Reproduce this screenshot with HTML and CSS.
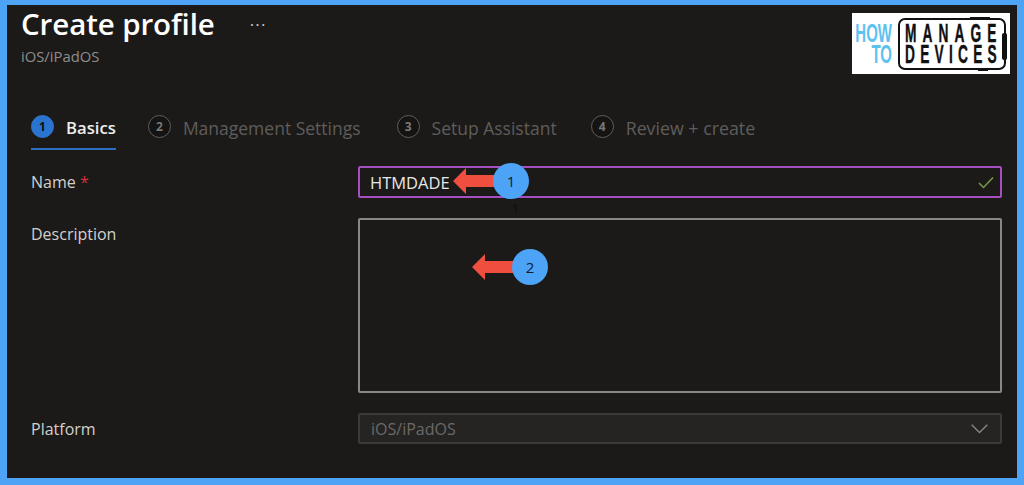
FILE: index.html
```html
<!DOCTYPE html>
<html lang="en">
<head>
<meta charset="utf-8">
<title>Create profile</title>
<link rel="stylesheet" href="styles.css">
</head>
<body>
<div class="frame">
  <header class="head">
    <div class="title-row">
      <h1 class="title">Create profile</h1>
      <span class="more">&middot;&middot;&middot;</span>
    </div>
    <div class="subtitle">iOS/iPadOS</div>
  </header>

  <div class="logo">
    <div class="logo-how"><span>HOW</span><span>TO</span></div>
    <div class="logo-box"><span class="logo-m">MANAGE</span><span class="logo-d">DEVICES</span><i class="logo-notch"></i></div>
  </div>

  <nav class="tabs">
    <div class="tab tab-active"><span class="step step-active">1</span><span class="tab-label">Basics</span></div>
    <div class="tab"><span class="step">2</span><span class="tab-label">Management Settings</span></div>
    <div class="tab tab-setup"><span class="step">3</span><span class="tab-label">Setup Assistant</span></div>
    <div class="tab"><span class="step">4</span><span class="tab-label tab-label-review">Review + create</span></div>
  </nav>

  <form class="form">
    <label class="field-label">Name <span class="req">*</span></label>
    <div class="input input-name">
      <span>HTMDADE</span>
      <svg class="check" width="16" height="13" viewBox="0 0 16 13"><path d="M1 7l4.5 4.5L15 1.5" fill="none" stroke="#7a9a4a" stroke-width="1.5"/></svg>
    </div>
    <label class="field-label">Description</label>
    <div class="input input-desc"></div>
    <label class="field-label">Platform</label>
    <div class="input input-select">
      <span>iOS/iPadOS</span>
      <svg width="17" height="10" viewBox="0 0 17 10"><path d="M.7.7l7.8 7.8L16.3.7" fill="none" stroke="#8a8886" stroke-width="1.3"/></svg>
    </div>
  </form>

  <div class="note note-1">
    <svg class="arrow" width="44" height="26" viewBox="0 0 44 26"><path d="M0 13L13 0v7h31v12H13v7z" fill="#f04e3e"/></svg>
    <span class="badge">1</span>
  </div>
  <span class="stray">1</span>
  <div class="note note-2">
    <svg class="arrow" width="44" height="26" viewBox="0 0 44 26"><path d="M0 13L13 0v7h31v12H13v7z" fill="#f04e3e"/></svg>
    <span class="badge">2</span>
  </div>
</div>
</body>
</html>
```
FILE: styles.css
```css
* { box-sizing: border-box; }
html, body { margin: 0; padding: 0; }
body { width: 1024px; height: 485px; overflow: hidden; font-family: "Open Sans", "Noto Sans", sans-serif; }

.frame {
  position: relative;
  width: 1024px;
  height: 485px;
  background: #1b1a19;
  border: solid #4da3f5;
  border-width: 5px 7px 7px 7px;
  padding: 0 15px 0 24px;
  color: #e6e6e6;
}

.head { margin-left: -10px; height: 92px; }
.title-row { display: flex; align-items: center; height: 38px; }
.title { margin: 0; font-size: 29.5px; font-weight: 600; line-height: 38px; color: #fff; letter-spacing: -0.1px; }
.more { margin-left: 35px; font-size: 17px; letter-spacing: 1.2px; color: #c8c6c4; line-height: 1; }
.subtitle { margin-top: 3px; font-size: 14.8px; line-height: 20px; color: #8f8d8b; }

.tabs { display: flex; gap: 36px; height: 53px; }
.tab { display: flex; align-items: flex-start; gap: 12px; padding-top: 18px; }
.tab-active { border-bottom: 2px solid #2a6fc4; margin-right: -4px; }
.tab-setup { margin-right: -2px; }
.step {
  width: 23px; height: 23px; border-radius: 50%;
  border: 1.5px solid #605e5c;
  color: #7a7876; font-size: 12px; font-weight: 700;
  display: flex; align-items: center; justify-content: center;
  background: #151413;
}
.step-active { background: #2a74d0; border-color: #2a74d0; color: #101010; }
.tab-label { font-size: 17.5px; line-height: 24px; margin-top: 1px; color: #5f5d5b; }
.tab-label-review { font-size: 17.8px; }
.tab-active .tab-label { font-size: 16.7px; color: #eee; font-weight: 600; }

.form {
  display: grid;
  grid-template-columns: 327px 644px;
  grid-template-rows: 32px 175px 31px;
  row-gap: 20px;
  margin-top: 16px;
}
.field-label { font-size: 16px; line-height: 20px; padding-top: 6px; color: #d2d0ce; }
.req { color: #d13438; }

.input { border: 2px solid #8a8886; border-radius: 2px; }
.input-name {
  border-color: #a64fc0;
  display: flex; align-items: center; justify-content: space-between;
  padding: 0 6px 0 10px;
  font-size: 16.5px;
  color: #e8e8e8;
}
.input-select {
  border: 2px solid #3b3a39;
  background: #252423;
  display: flex; align-items: center; justify-content: space-between;
  padding: 0 12px 0 11px;
  font-size: 16px;
  color: #6b6967;
}

.note { position: absolute; display: flex; align-items: center; }
.note-1 { left: 446px; top: 158px; }
.note-2 { left: 465px; top: 244px; }
.arrow { margin-right: -4px; }
.badge {
  position: relative;
  width: 36px; height: 36px; border-radius: 50%;
  background: #4da3f5; color: #102030;
  font-size: 15px; line-height: 36px; text-align: center;
}
.stray { position: absolute; left: 505px; top: 197px; font-size: 12px; line-height: 14px; color: #0c0c0c; }

.logo {
  position: absolute; left: 845px; top: 8px;
  width: 158px; height: 61px;
  background: #fff;
  display: flex; align-items: center; gap: 6px;
  padding: 0 4px 0 3px;
}
.logo-how {
  width: 37px;
  flex: none;
  font-family: "Liberation Sans", sans-serif;
  font-weight: 700; font-size: 25px; line-height: 21px; color: #5ec2f0;
  text-align: right;
}
.logo-how span { display: block; white-space: nowrap; direction: rtl; transform-origin: right center; transform: scaleX(.6); }
.logo-box {
  position: relative;
  flex: none; width: 108px; height: 52px;
  border: 2.5px solid #111; border-radius: 7px;
  padding-left: 4.5px;
  display: flex; flex-direction: column; justify-content: center;
  font-family: "Liberation Sans", sans-serif;
  font-weight: 700; color: #111; font-size: 25px; line-height: 21px;
  -webkit-text-stroke: .4px #111;
}
.logo-box span { display: block; width: 180px; white-space: nowrap; transform-origin: left center; transform: scaleX(.55); }
.logo-m { letter-spacing: 11px; }
.logo-d { letter-spacing: 9.5px; }
.logo-notch { position: absolute; right: -2.5px; top: 13px; width: 5px; height: 27px; background: #111; border-radius: 2px; }
.logo-box::before { content: ""; position: absolute; top: -3px; right: 14px; width: 20px; height: 3px; background: #111; }
.logo-box::after { content: ""; position: absolute; bottom: -3px; right: 16px; width: 10px; height: 3px; background: #111; }
```
